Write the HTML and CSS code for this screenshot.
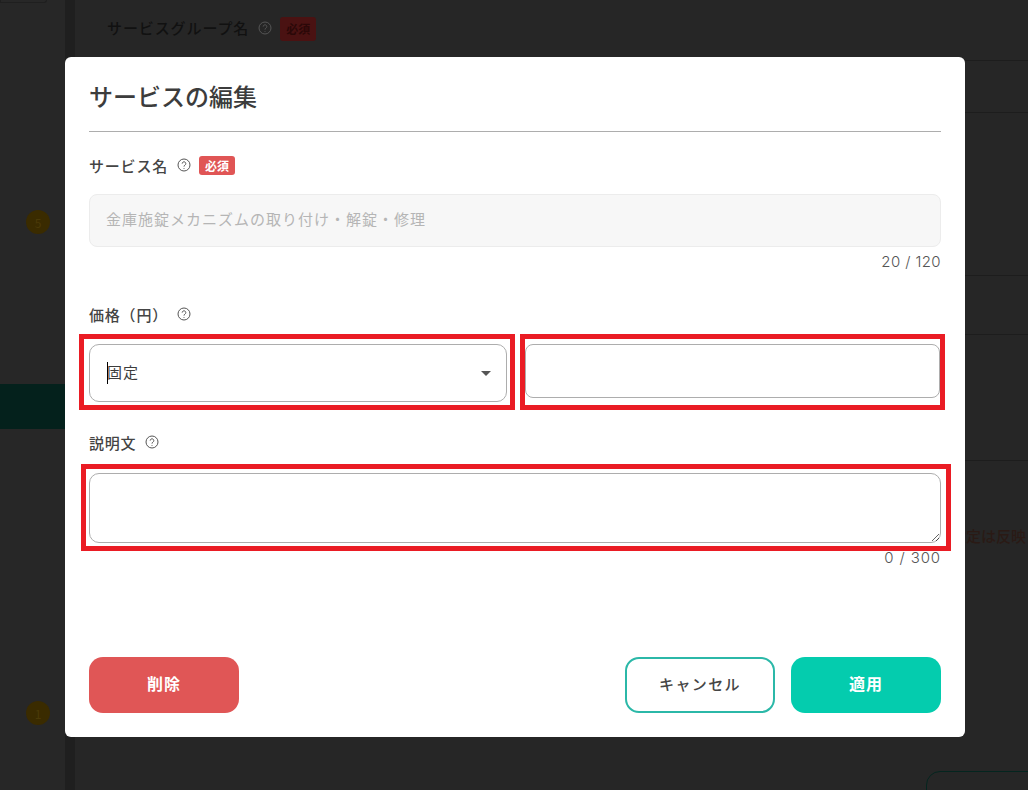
FILE: index.html
```html
<!DOCTYPE html>
<html lang="ja">
<head>
<meta charset="utf-8">
<title>サービスの編集</title>
<link rel="stylesheet" href="styles.css">
</head>
<body>
<div class="page">
  <aside class="sidebar">
    <div class="side-top"></div>
    <div class="side-badge badge-five">5</div>
    <div class="side-active"></div>
    <div class="side-badge badge-one">1</div>
  </aside>
  <div class="gutter"></div>
  <main class="main">
    <div class="row row-head">
      <span class="bg-label">サービスグループ名</span>
      <svg class="help help-bg" viewBox="0 0 14 14"><circle cx="7" cy="7" r="6"/><path d="M5.2 5.6a1.8 1.8 0 1 1 2.8 1.5c-.7.4-1 .8-1 1.5"/><path d="M7 10v.8"/></svg>
      <span class="bg-req">必須</span>
    </div>
    <div class="row row-a"></div>
    <div class="row row-b"></div>
    <div class="row row-c"></div>
    <div class="row row-d"></div>
    <div class="row-e"><span class="bg-warn">設定は反映</span></div>
    <div class="row-f"><div class="bg-button"></div></div>
  </main>
</div>

<div class="overlay">
  <section class="modal">
    <h1 class="modal-title">サービスの編集</h1>

    <div class="label label-name">
      <span>サービス名</span>
      <svg class="help" viewBox="0 0 14 14"><circle cx="7" cy="7" r="6"/><path d="M5.2 5.6a1.8 1.8 0 1 1 2.8 1.5c-.7.4-1 .8-1 1.5"/><path d="M7 10v.8"/></svg>
      <span class="req">必須</span>
    </div>
    <div class="input input-disabled">金庫施錠メカニズムの取り付け・解錠・修理</div>
    <div class="counter">20 / 120</div>

    <div class="label label-price">
      <span>価格（円）</span>
      <svg class="help" viewBox="0 0 14 14"><circle cx="7" cy="7" r="6"/><path d="M5.2 5.6a1.8 1.8 0 1 1 2.8 1.5c-.7.4-1 .8-1 1.5"/><path d="M7 10v.8"/></svg>
    </div>
    <div class="price-row">
      <div class="select">
        <span class="select-value">固定</span>
        <svg class="select-arrow" viewBox="0 0 10 5"><path d="M0 0h10L5 5z"/></svg>
      </div>
      <input class="price-input" type="text" aria-label="価格">
    </div>

    <div class="label label-desc">
      <span>説明文</span>
      <svg class="help" viewBox="0 0 14 14"><circle cx="7" cy="7" r="6"/><path d="M5.2 5.6a1.8 1.8 0 1 1 2.8 1.5c-.7.4-1 .8-1 1.5"/><path d="M7 10v.8"/></svg>
    </div>
    <textarea class="textarea" aria-label="説明文"></textarea>
    <div class="counter counter-desc">0 / 300</div>

    <div class="actions">
      <button class="btn btn-delete" type="button">削除</button>
      <div class="actions-right">
        <button class="btn btn-cancel" type="button">キャンセル</button>
        <button class="btn btn-apply" type="button">適用</button>
      </div>
    </div>
  </section>
</div>

<div class="mark mark-select"></div>
<div class="mark mark-input"></div>
<div class="mark mark-textarea"></div>
</body>
</html>
```

FILE: styles.css
```css
* { box-sizing: border-box; }
html, body { margin: 0; padding: 0; }
body {
  width: 1028px;
  height: 790px;
  overflow: hidden;
  position: relative;
  background: #262626;
  font-family: "Noto Sans CJK JP", "Noto Sans", sans-serif;
  color: #3c3c3c;
}

/* dimmed page behind the dialog */
.page { display: flex; height: 790px; overflow: hidden; }
.sidebar { width: 65px; flex: none; background: #272727; display: flex; flex-direction: column; }
.side-top { width: 47px; height: 3px; border: 1px solid #1f1f1f; border-top: 0; border-radius: 0 0 4px 0; }
.side-badge {
  width: 24px; height: 24px; margin-left: 26px; border-radius: 50%;
  background: #3a2b00; color: #4a3a08; font-size: 12px;
  display: flex; align-items: center; justify-content: center;
}
.badge-five { margin-top: 207px; }
.side-active { height: 45px; margin-top: 150px; background: #04211c; }
.badge-one { margin-top: 272px; }
.gutter { width: 10px; flex: none; background: #1f1f1f; }
.main { flex: 1; min-width: 0; overflow: hidden; background: #262626; }
.row { border-bottom: 1px solid #1d1d1d; }
.row-head { height: 61px; padding: 17px 0 0 32px; display: flex; align-items: flex-start; gap: 8px; }
.bg-label { font-size: 15px; line-height: 22px; letter-spacing: .9px; color: #111; font-weight: 500; }
.help-bg { margin-top: 4px; margin-left: 1px; stroke: #111; }
.bg-req {
  width: 36px; height: 24px; background: #4a1212; color: #2b0808; border-radius: 3px;
  font-size: 12px; font-weight: 700; text-align: center; line-height: 24px;
}
.row-a { height: 52px; }
.row-b { height: 163px; }
.row-c { height: 59px; }
.row-d { height: 126px; }
.row-e { height: 250px; padding: 65px 0 0 876px; white-space: nowrap; }
.bg-warn { font-size: 15px; font-weight: 500; line-height: 20px; color: #2a1a15; display: block; }
.row-f { padding-left: 851px; margin-top: 60px; }
.bg-button { width: 200px; height: 60px; border: 1px solid #04251f; border-radius: 14px; }

/* dialog */
.overlay { position: absolute; top: 57px; left: 65px; }
.modal {
  width: 900px;
  height: 680px;
  padding: 0 24px;
  background: #fff;
  border-radius: 6px;
  display: flex;
  flex-direction: column;
}
.modal-title {
  margin: 0;
  height: 75px;
  padding-top: 21px;
  border-bottom: 1px solid #adadad;
  font-size: 24px;
  line-height: 36px;
  font-weight: 500;
  color: #3c3c3c;
  flex: none;
}
.label {
  display: flex;
  align-items: center;
  height: 22px;
  font-size: 15px;
  font-weight: 500;
  letter-spacing: .8px;
  color: #444;
  flex: none;
}
.label-name { margin-top: 22px; }
.label-name .help { margin-left: 9px; }
.label-price { margin-top: 31px; }
.label-price .help { margin-left: 9px; }
.label-desc { margin-top: 29px; }
.label-desc .help { margin-left: 9px; }
.help { width: 14px; height: 14px; flex: none; fill: none; stroke: #555; stroke-width: 1; }
.req {
  margin-left: 8px;
  width: 36px;
  height: 19px;
  background: #e05555;
  color: #fff;
  border-radius: 3px;
  font-size: 12px;
  font-weight: 700;
  letter-spacing: 0;
  line-height: 19px;
  text-align: center;
}
.input-disabled {
  margin-top: 18px;
  height: 53px;
  padding-left: 16px;
  background: #f7f7f7;
  border: 1px solid #ececec;
  border-radius: 8px;
  font-size: 15px;
  line-height: 48px;
  letter-spacing: 1px;
  color: #b5b5b5;
  flex: none;
}
.counter {
  height: 20px;
  margin-top: 5px;
  font-family: "Inter", "Noto Sans", sans-serif;
  font-weight: 300;
  font-size: 15px;
  line-height: 20px;
  letter-spacing: .4px;
  text-align: right;
  color: #555;
  flex: none;
}
.counter-desc { letter-spacing: .9px; }
.price-row { display: flex; align-items: flex-start; margin-top: 19px; flex: none; }
.select {
  position: relative;
  width: 418px;
  height: 58px;
  padding: 0 15px 4px 17px;
  border: 1px solid #adadad;
  border-radius: 10px;
  display: flex;
  align-items: center;
  justify-content: space-between;
  font-size: 15px;
  letter-spacing: 1px;
  color: #3c3c3c;
}
.select::before {
  content: "";
  position: absolute;
  left: 17px;
  top: 17px;
  width: 1px;
  height: 22px;
  background: #000;
}
.select-arrow { width: 10px; height: 5px; margin-top: 4px; fill: #555; }
.price-input {
  margin-left: 18px;
  width: 415px;
  height: 54px;
  padding: 0 16px;
  background: #fff;
  border: 1px solid #adadad;
  border-radius: 8px;
  outline: none;
}
.textarea {
  display: block;
  margin-top: 20px;
  width: 852px;
  height: 70px;
  padding: 12px 16px;
  background: #fff;
  border: 1px solid #adadad;
  border-radius: 10px;
  outline: none;
  flex: none;
}
.actions { display: flex; justify-content: space-between; margin-top: 89px; flex: none; }
.actions-right { display: flex; gap: 16px; }
.btn {
  width: 150px;
  height: 56px;
  padding: 0 0 4px;
  border-radius: 14px;
  border: 0;
  font-family: inherit;
  font-size: 16px;
  font-weight: 700;
  letter-spacing: 1px;
  color: #fff;
}
.btn-delete { background: #e05656; }
.btn-apply { background: #04ccae; }
.btn-cancel { background: #fff; border: 2px solid #2bb8a8; color: #454545; font-size: 15px; font-weight: 500; letter-spacing: 1.4px; }

/* red review annotations drawn over the screenshot */
.mark { position: absolute; border: 5px solid #ea1c24; pointer-events: none; }
.mark-select { left: 79px; top: 334px; width: 436px; height: 76px; }
.mark-input { left: 520px; top: 334px; width: 425px; height: 76px; }
.mark-textarea { left: 81px; top: 464px; width: 870px; height: 87px; }
```
